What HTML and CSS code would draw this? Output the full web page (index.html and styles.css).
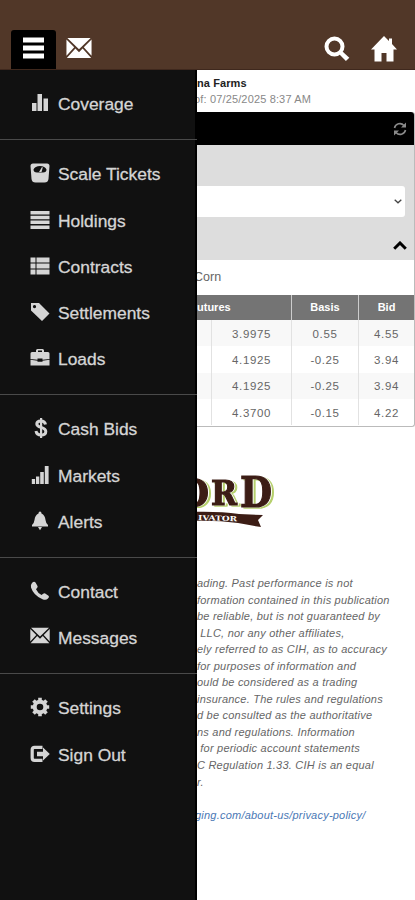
FILE: index.html
```
<!DOCTYPE html>
<html lang="en">
<head>
    <meta charset="UTF-8">
    <meta name="viewport" content="width=device-width, initial-scale=1.0">
    <title>Cash Bids</title>
    <link rel="stylesheet" href="styles.css">
</head>
<body>
    <header class="topbar">
        <button class="tab active" aria-label="Menu">
            <svg width="21" height="22" viewBox="0 0 21 22"><path d="M0 .5h21v5H0zM0 8.5h21v5H0zM0 16.5h21v5H0z"/></svg>
        </button>
        <button class="tab" aria-label="Messages">
            <svg width="26" height="22" viewBox="0 0 20 17"><use href="#mail"/></svg>
        </button>
        <span class="spacer"></span>
        <button class="tool" aria-label="Search">
            <svg width="26" height="26" viewBox="0 0 26 26"><circle cx="10.5" cy="10.5" r="8" fill="none" stroke="#fff" stroke-width="4"/><path d="M15.5 18.5l3-3 6.8 6.2-3.4 3.4z"/></svg>
        </button>
        <button class="tool" aria-label="Home">
            <svg width="26" height="26" viewBox="0 0 26 26"><path d="M13 0l5 5V2.5h3V8l5 5.5h-3.500V25.500h-7V17h-5v8.500h-7V13.500H0z"/></svg>
        </button>
    </header>

    <div class="page">
        <nav class="drawer">
            <ul>
                <li><svg viewBox="0 0 20 20"><path d="M2 10h4.500v8H2zM7.500 1H12v17H7.500zM13.500 5.500H18V18h-4.500z"/></svg>Coverage</li>
            </ul>
            <ul>
                <li><svg viewBox="0 0 20 20"><path fill-rule="evenodd" d="M3 .5h14q2.500 0 2.500 2.500l-1 13q-.5 3.500-4 3.500h-9q-3.500 0-4-3.500L.5 3Q.5.500 3 .5zM3.500 6.500q0 3 3.500 3h6q3.500 0 3.500-3-1.500-3.500-6.500-3.500T3.500 6.500z"/><path d="M9 9l3-5 .8.500-1.300 4.500z"/></svg>Scale Tickets</li>
                <li><svg viewBox="0 0 20 20"><path d="M.5 1h19v3.500H.500zM.5 5.800h19v3.500H.500zM.5 10.600h19v3.500H.500zM.5 15.400h19v3.500H.500z"/></svg>Holdings</li>
                <li><svg viewBox="0 0 20 20"><path d="M.5 1.500h5v4.900h-5zM6.500 1.500h13v4.900h-13zM.5 7.500h5v4.900h-5zM6.500 7.500h13v4.900h-13zM.5 13.500h5v4.900h-5zM6.500 13.500h13v4.900h-13z"/></svg>Contracts</li>
                <li><svg viewBox="0 0 20 20"><path fill-rule="evenodd" d="M1 1h8l10.500 10.500-7.500 7.500L1 8.500zM4.500 3a1.600 1.600 0 1 0 .01 0z"/></svg>Settlements</li>
                <li><svg viewBox="0 0 20 20"><path fill-rule="evenodd" d="M6 4V2.500Q6 1 7.500 1h5Q14 1 14 2.500V4h4q1.500 0 1.500 1.500V11l-7 .8V10.500h-5v1.300l-7-.8V5.500Q.5 4 2 4zM8 4h4V2.500H8zM.5 11.800l7 .9v1h5v-1l7-.9V17.500H.5z"/></svg>Loads</li>
            </ul>
            <ul>
                <li><svg viewBox="0 0 20 20"><path d="M15.500 6.500C15 3.500 13 3 10.800 3 8.500 3 6.800 4 6.800 6c0 4.500 9 2.200 9 7.500 0 2.500-2 3.500-4.700 3.500-3 0-4.600-1-5.100-4" fill="none" stroke="#d5d5d5" stroke-width="3"/><path d="M10 0h2.200v20H10z"/></svg>Cash Bids</li>
                <li><svg viewBox="0 0 20 20"><path d="M1.800 14h3.300v5H1.800zM6 11.500h3.300V19H6zM10.200 7h3.600v12h-3.600zM14.800 1h3.800v18h-3.800z"/></svg>Markets</li>
                <li><svg viewBox="0 0 20 20"><path d="M10 .5q1.500 0 1.500 2Q15 4 15.500 9q.3 3 2.500 5v1.500H2V14q2.200-2 2.500-5Q5 4 8.500 2.500q0-2 1.500-2zM8 16h4l-2 3.200z"/></svg>Alerts</li>
            </ul>
            <ul>
                <li><svg viewBox="0 0 20 20"><path d="M2 2q2-2 3.500-.5L7.500 5q.5 1-.5 2L6 8.300q1.700 3.700 5.500 5.700l1.700-1.200q1-.8 2-.2l3.300 2.200q1.300 1-.5 2.700-2 2-5.500.7Q3.500 14.500 1 6.500.4 3.500 2 2z"/></svg>Contact</li>
                <li><svg viewBox="0 0 20 20"><g id="mail"><path d="M1 .8h18L10 9.500zM.3 2l6 6-6 6.500zM19.700 2l-6 6 6 6.500zM7.200 8.900L10 11.700l2.800-2.800 6.600 7.300H.6z"/></g></svg>Messages</li>
            </ul>
            <ul>
                <li><svg viewBox="0 0 20 20"><circle cx="10" cy="10" r="5.300" fill="none" stroke="#d5d5d5" stroke-width="4"/><path d="M8.200.8h3.600v3.500H8.200zM8.200 15.700h3.600v3.500H8.200zM.8 8.200h3.500v3.600H.8zM15.700 8.200h3.500v3.600h-3.500zM2.200 4.800l2.600-2.600 2.500 2.500-2.600 2.600zM12.700 4.700l2.500-2.500 2.600 2.600-2.500 2.500zM2.200 15.200l2.500-2.500 2.600 2.600-2.500 2.500zM12.700 15.300l2.600-2.600 2.500 2.500-2.600 2.600z"/></svg>Settings</li>
                <li><svg viewBox="0 0 20 20"><path d="M12.500 3.300H4.500Q2.200 3.300 2.200 5.500v8.500q0 2.300 2.300 2.300h8" fill="none" stroke="#d5d5d5" stroke-width="3.200"/><path d="M7 7.700h6V3.500L19.800 10 13 16.500v-4.200H7z"/></svg>Sign Out</li>
            </ul>
        </nav>

        <main class="content">
            <div class="account">
                <div class="farm">na Farms</div>
                <div class="asof">of: 07/25/2025 8:37 AM</div>
            </div>
            <section class="bids">
                <div class="bids-bar">
                    <svg width="14" height="14" viewBox="0 0 14 14"><path d="M1.500 6A5.500 5.500 0 0 1 11 3.500M12.500 8A5.500 5.500 0 0 1 3 10.500" fill="none" stroke="#8a8a8a" stroke-width="1.600"/><path d="M13 .5v5H8zM1 13.500v-5h5z" fill="#8a8a8a"/></svg>
                </div>
                <div class="filter">
                    <div class="select">
                        <svg width="8" height="5" viewBox="0 0 8 5"><path d="M.7.700L4 3.800 7.300.700" fill="none" stroke="#444" stroke-width="1.300"/></svg>
                    </div>
                    <svg class="collapse" width="14" height="9" viewBox="0 0 14 9"><path d="M1.200 7.700L7 2l5.800 5.700" fill="none" stroke="#000" stroke-width="3"/></svg>
                </div>
                <div class="crop">Corn</div>
                <table>
                    <colgroup>
                        <col class="month"><col class="price"><col class="basis"><col class="bid">
                    </colgroup>
                    <thead>
                        <tr><th class="futures" colspan="2">utures</th><th>Basis</th><th>Bid</th></tr>
                    </thead>
                    <tbody>
                        <tr><td></td><td>3.9975</td><td>0.55</td><td>4.55</td></tr>
                        <tr><td></td><td>4.1925</td><td>-0.25</td><td>3.94</td></tr>
                        <tr><td></td><td>4.1925</td><td>-0.25</td><td>3.94</td></tr>
                        <tr><td></td><td>4.3700</td><td>-0.15</td><td>4.22</td></tr>
                    </tbody>
                </table>
            </section>

            <svg class="logo" width="90" height="60" viewBox="197 470 90 60">
                <g class="logo-name">
                    <text x="178" y="506" font-size="37" textLength="31" lengthAdjust="spacingAndGlyphs">O</text>
                    <text x="211" y="505" font-size="34" textLength="26" lengthAdjust="spacingAndGlyphs">R</text>
                    <text x="240" y="507" font-size="43" textLength="32" lengthAdjust="spacingAndGlyphs">D</text>
                </g>
                <path d="M190 512Q218 511 239 514l24 1-5 5 3 7q-13-2-23-4-22-3-48-2z" fill="#3c1d15"/>
                <text class="logo-tag" x="198" y="520" font-size="7" textLength="39" lengthAdjust="spacingAndGlyphs" transform="rotate(2 198 520)">IVATOR</text>
            </svg>

            <div class="disclaimer">
                <p>ading. Past performance is not<br>
                formation contained in this publication<br>
                be reliable, but is not guaranteed by<br>
                &nbsp;LLC, nor any other affiliates,<br>
                ely referred to as CIH, as to accuracy<br>
                for purposes of information and<br>
                ould be considered as a trading<br>
                insurance. The rules and regulations<br>
                d be consulted as the authoritative<br>
                ns and regulations. Information<br>
                &nbsp;for periodic account statements<br>
                C Regulation 1.33. CIH is an equal<br>
                r.</p>
                <a>ging.com/about-us/privacy-policy/</a>
            </div>
        </main>
    </div>
</body>
</html>
```
FILE: styles.css
```
* {
    box-sizing: border-box;
}
body {
    margin: 0;
    height: 900px;
    overflow: hidden;
    font-family: "Liberation Sans", Arial, sans-serif;
    background: #fff;
}
.topbar {
    display: flex;
    align-items: flex-end;
    height: 70px;
    padding: 0 18px 0 11px;
    background: #513728;
    border-bottom: 1px solid #3f281d;
}
.topbar button {
    display: flex;
    align-items: center;
    justify-content: center;
    height: 39px;
    padding: 0 0 3px;
    border: none;
    background: none;
}
.topbar svg {
    fill: #fff;
}
.topbar .tab {
    width: 45px;
}
.topbar .active {
    background: #000;
    border-radius: 3px 3px 0 0;
}
.topbar .tool {
    width: 26px;
    margin-left: 21px;
    padding-bottom: 2px;
}
.spacer {
    flex: 1;
}
.page {
    display: flex;
    height: 830px;
}
.drawer {
    position: relative;
    z-index: 1;
    width: 197px;
    flex: none;
    background: #111;
    box-shadow: inset -2px 0 #000;
}
.drawer ul {
    list-style: none;
    margin: 0;
    padding: 11.5px 0 11.4px;
    border-bottom: 1px solid #4a4a4a;
}
.drawer ul:last-child {
    border-bottom: none;
}
.drawer li {
    display: flex;
    align-items: center;
    height: 46.25px;
    padding-left: 30px;
    font-size: 17.4px;
    color: #d5d5d5;
    -webkit-text-stroke: 0.3px #d5d5d5;
}
.drawer svg {
    width: 20px;
    height: 20px;
    margin: -3px 8px 0 0;
    fill: #d5d5d5;
}
.content {
    flex: 1;
    min-width: 0;
    color: #666;
}
.account {
    height: 42px;
    padding-top: 5px;
    font-size: 11px;
    line-height: 16px;
    white-space: nowrap;
}
.farm {
    font-weight: bold;
    color: #222;
    letter-spacing: 0.1px;
}
.asof {
    margin-left: -3px;
    color: #888;
    letter-spacing: 0.15px;
}
.bids {
    height: 315px;
    border-right: 1px solid #bbb;
    border-bottom: 1px solid #bbb;
    border-radius: 0 3px 3px 0;
}
.bids-bar {
    display: flex;
    align-items: center;
    justify-content: flex-end;
    height: 33px;
    padding-right: 7px;
    background: #000;
    border-radius: 0 3px 0 0;
}
.filter {
    height: 115px;
    padding-top: 41px;
    background: #ddd;
}
.select {
    display: flex;
    align-items: center;
    justify-content: flex-end;
    height: 31px;
    margin-right: 9px;
    padding-right: 3px;
    background: #fff;
    border-radius: 0 3px 3px 0;
}
.collapse {
    display: block;
    margin: 24px 7px 0 auto;
}
.crop {
    height: 35px;
    margin-left: -3px;
    font-size: 12.5px;
    line-height: 35px;
}
table {
    width: 217px;
    table-layout: fixed;
    border-collapse: separate;
    border-spacing: 0;
    font-size: 11.5px;
    text-align: center;
}
.month {
    width: 15px;
}
.price {
    width: 80px;
}
.basis {
    width: 67px;
}
.bid {
    width: 55px;
}
th, td {
    padding: 0;
    border-right: 1px solid #e2e2e2;
}
th {
    height: 25px;
    padding-bottom: 2px;
    background: #747474;
    color: #fff;
    font-size: 11px;
    border-right-color: #ccc;
}
th:last-child, td:last-child {
    border-right: none;
}
.futures {
    text-align: left;
}
td {
    height: 26.3px;
    padding-top: 1px;
    letter-spacing: 0.6px;
}
tbody tr:nth-child(odd) {
    background: #f8f8f8;
}
.logo {
    display: block;
    margin-top: 43px;
    font-family: "DejaVu Serif", serif;
    font-weight: bold;
}
.logo-name {
    fill: #3c1d15;
    stroke: #3c1d15;
    stroke-width: 1.2px;
    filter: drop-shadow(1px 0.5px 0 #fff) drop-shadow(2px 1.5px 0 #b5cf6b);
}
.logo-tag {
    fill: #fff;
}
.disclaimer {
    margin-top: 45px;
    font-size: 11px;
    font-style: italic;
    line-height: 16.55px;
    letter-spacing: 0.22px;
    white-space: nowrap;
}
.disclaimer p {
    margin: 0 0 16.5px;
}
.disclaimer a {
    margin-left: -2px;
    color: #4a78b5;
}
```
